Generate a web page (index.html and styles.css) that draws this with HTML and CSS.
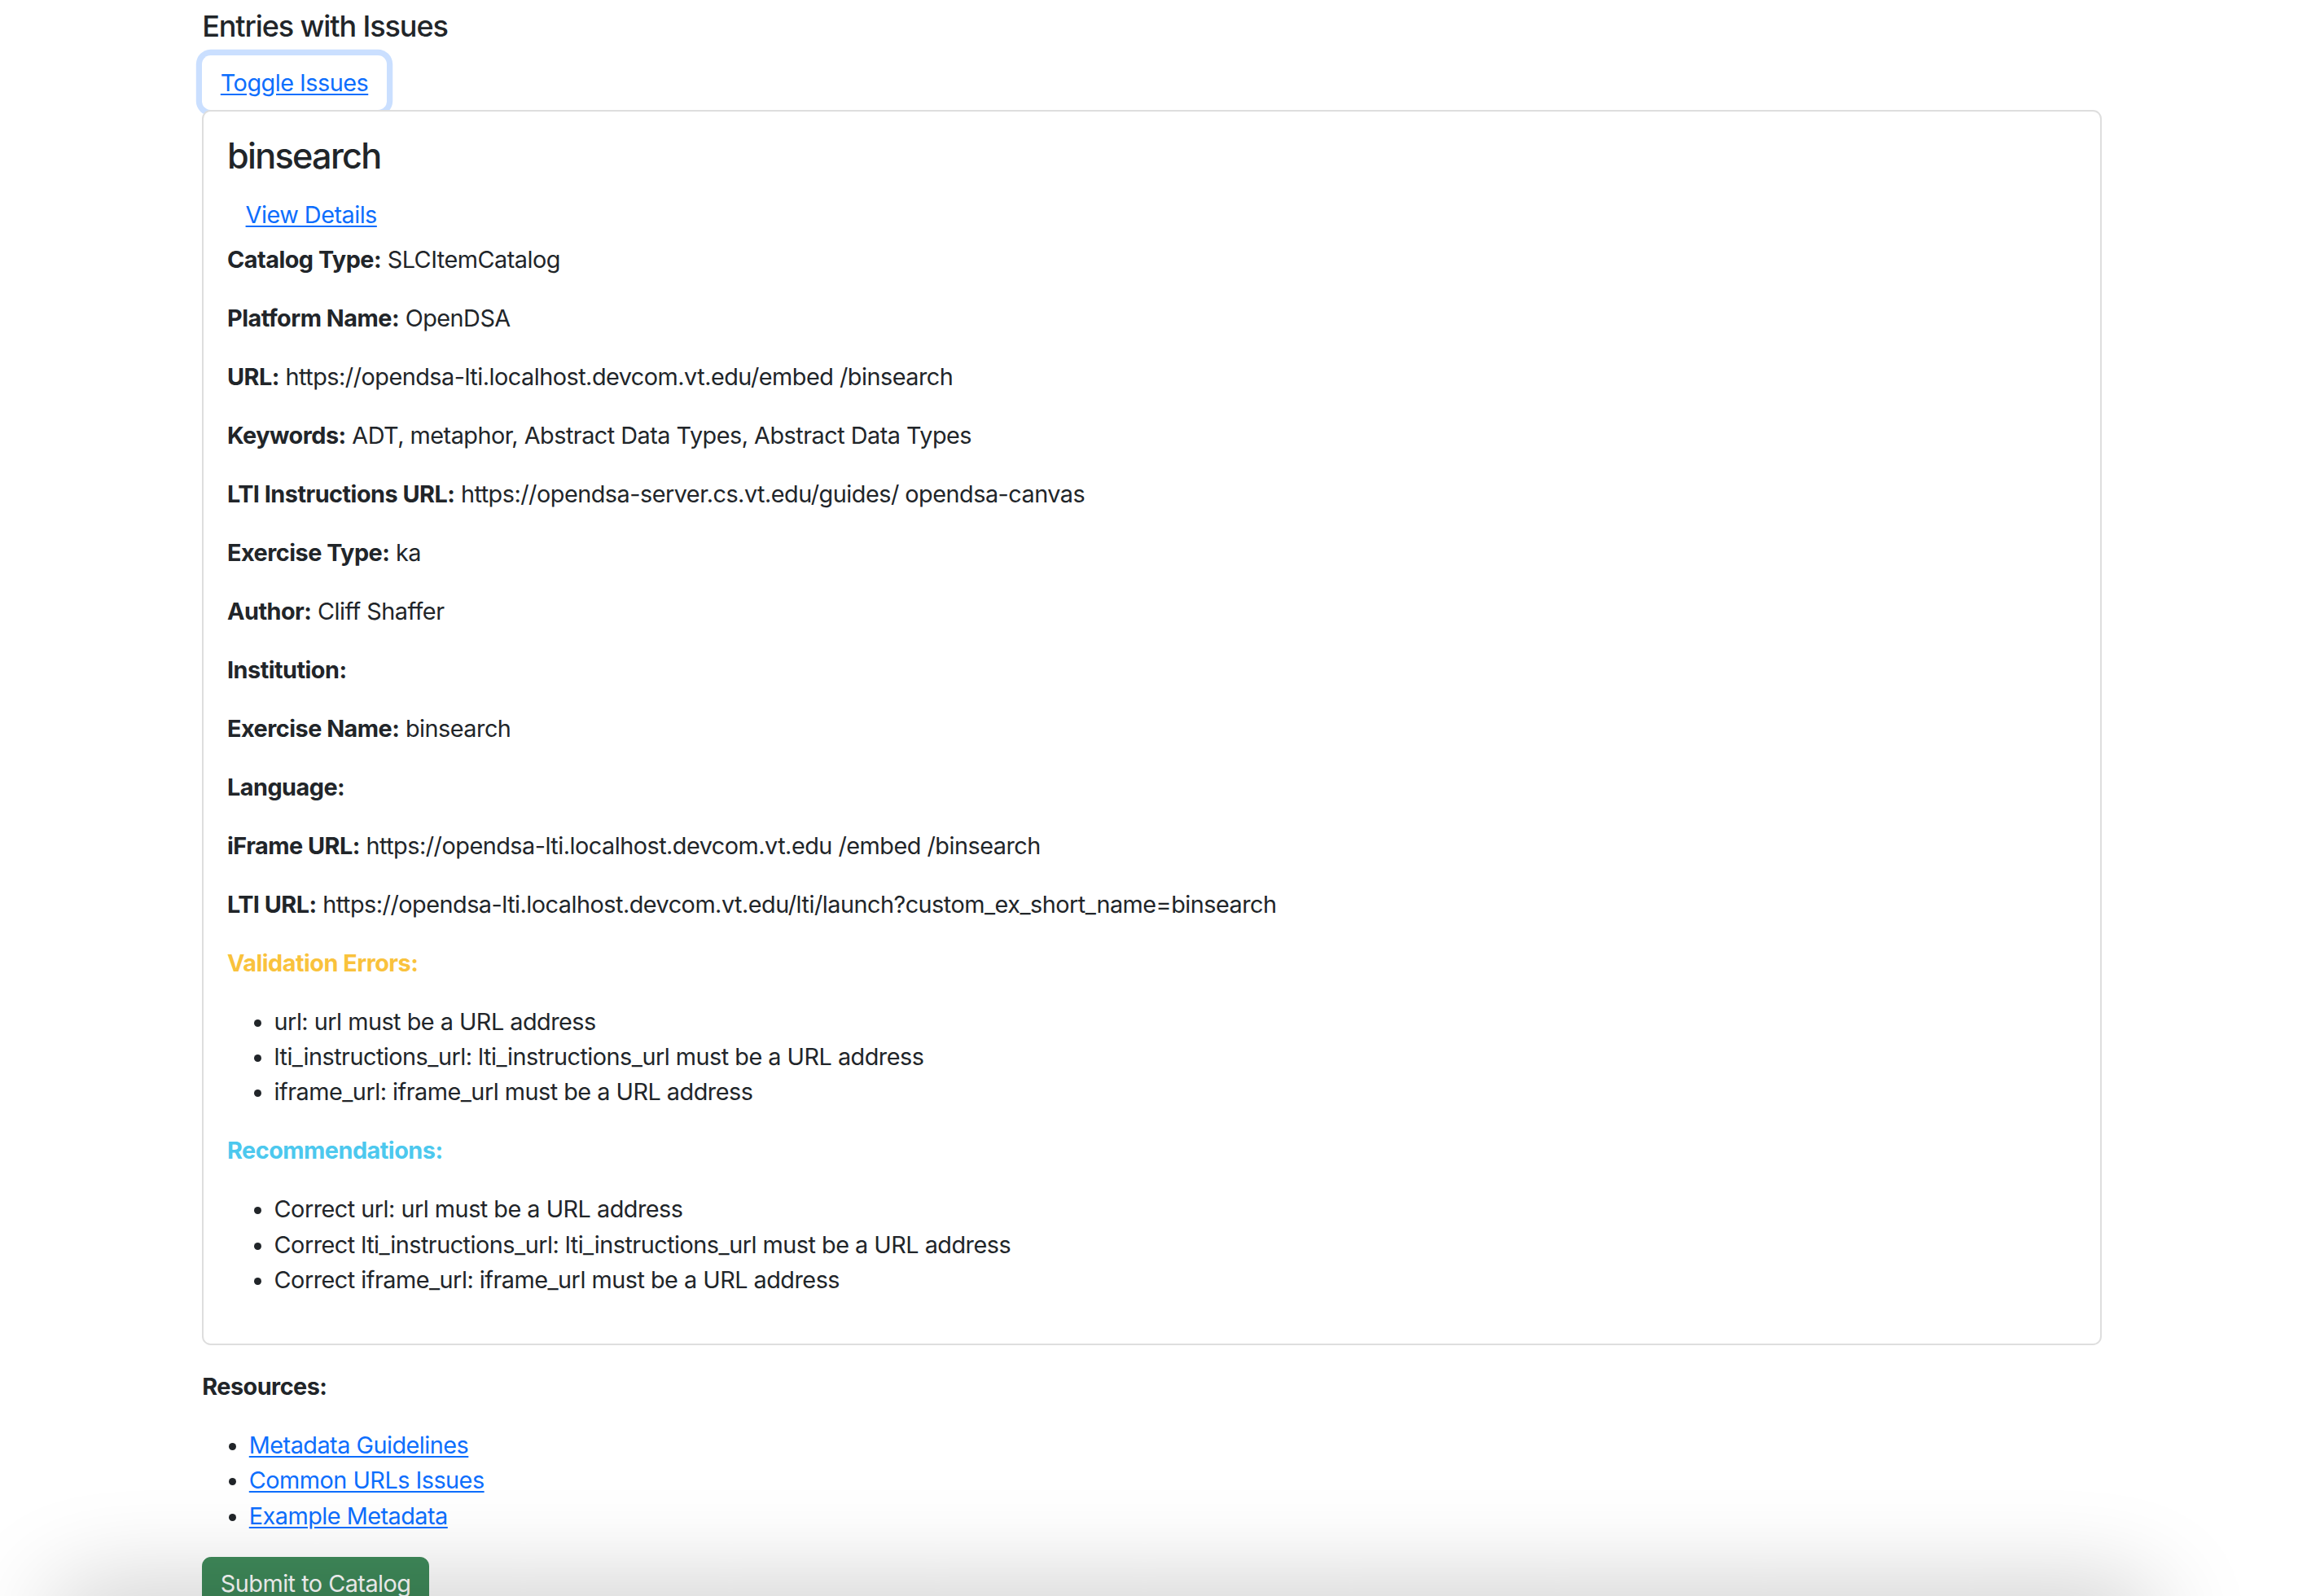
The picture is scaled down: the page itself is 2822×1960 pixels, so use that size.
FILE: index.html
```html
<!DOCTYPE html>
<html lang="en">
<head>
<meta charset="utf-8">
<title>Entries with Issues</title>
<link rel="stylesheet" href="styles.css">
</head>
<body>
<main class="container">
  <h5 class="section-title">Entries with Issues</h5>
  <div class="toggle-row">
    <button class="btn btn-link btn-focus" type="button">Toggle Issues</button>
  </div>
  <div class="card">
    <div class="card-body">
      <h4 class="card-title">binsearch</h4>
      <div class="details-row"><a class="btn btn-link" href="#">View Details</a></div>
      <p><strong>Catalog Type:</strong> SLCItemCatalog</p>
      <p><strong>Platform Name:</strong> OpenDSA</p>
      <p><strong>URL:</strong> https://opendsa-lti.localhost.devcom.vt.edu/embed /binsearch</p>
      <p><strong>Keywords:</strong> ADT, metaphor, Abstract Data Types, Abstract Data Types</p>
      <p><strong>LTI Instructions URL:</strong> https://opendsa-server.cs.vt.edu/guides/ opendsa-canvas</p>
      <p><strong>Exercise Type:</strong> ka</p>
      <p><strong>Author:</strong> Cliff Shaffer</p>
      <p><strong>Institution:</strong> </p>
      <p><strong>Exercise Name:</strong> binsearch</p>
      <p><strong>Language:</strong> </p>
      <p><strong>iFrame URL:</strong> https://opendsa-lti.localhost.devcom.vt.edu /embed /binsearch</p>
      <p><strong>LTI URL:</strong> https://opendsa-lti.localhost.devcom.vt.edu/lti/launch?custom_ex_short_name=binsearch</p>
      <p class="text-warning"><strong>Validation Errors:</strong></p>
      <ul>
        <li>url: url must be a URL address</li>
        <li>lti_instructions_url: lti_instructions_url must be a URL address</li>
        <li>iframe_url: iframe_url must be a URL address</li>
      </ul>
      <p class="text-info"><strong>Recommendations:</strong></p>
      <ul>
        <li>Correct url: url must be a URL address</li>
        <li>Correct lti_instructions_url: lti_instructions_url must be a URL address</li>
        <li>Correct iframe_url: iframe_url must be a URL address</li>
      </ul>
    </div>
  </div>
  <p><strong>Resources:</strong></p>
  <ul>
    <li><a href="#">Metadata Guidelines</a></li>
    <li><a href="#">Common URLs Issues</a></li>
    <li><a href="#">Example Metadata</a></li>
  </ul>
  <button class="btn btn-success" type="button">Submit to Catalog</button>
</main>
<div class="window-shadow"></div>
</body>
</html>
```

FILE: styles.css
```css
html {
  font-size: 28.8px;
}
body {
  margin: 0;
  padding-left: 7.2px;
  background: #ffffff;
  color: #212529;
  font-family: "Inter", "Roboto", "Liberation Sans", sans-serif;
  font-size: 1rem;
  line-height: 1.5;
  letter-spacing: -0.5px;
  overflow: hidden;
  height: 1960px;
}
.container {
  max-width: 2376px;
  margin: 0 auto;
  padding: 10.8px 21.6px 0;
  box-sizing: border-box;
}
.section-title {
  font-size: 1.25rem;
  font-weight: 500;
  line-height: 1.2;
  letter-spacing: -1.1px;
  margin: 0 0 0.5rem;
}
h4.card-title {
  font-size: 1.5rem;
  font-weight: 500;
  line-height: 1.2;
  letter-spacing: -1.7px;
  margin: 0 0 0.5rem;
}
.btn {
  display: inline-block;
  font-family: inherit;
  font-size: 1rem;
  font-weight: 400;
  line-height: 1.5;
  letter-spacing: -0.5px;
  padding: 10.8px 21.6px;
  border: 1.8px solid transparent;
  border-radius: 10.8px;
  background: transparent;
  text-align: center;
  cursor: pointer;
  vertical-align: middle;
}
.btn-link {
  color: #0d6efd;
  text-decoration: underline;
  text-underline-offset: 3px;
}
.btn-focus {
  box-shadow: 0 0 0 7.2px rgba(13, 110, 253, 0.22);
}
.toggle-row {
  line-height: 0;
}
.details-row {
  line-height: 0;
  margin-top: -1.8px;
}
.card {
  position: relative;
  background: #ffffff;
  border: 2px solid #dedede;
  border-radius: 10.8px;
  margin-bottom: 28.8px;
}
.card-body {
  padding: 28.8px;
}
p {
  margin: 0 0 28.8px;
}
strong {
  font-weight: 700;
}
ul {
  margin: 0 0 28.8px;
  padding-left: 57.6px;
}
a {
  color: #0d6efd;
  text-decoration: underline;
  text-underline-offset: 3px;
}
.text-warning {
  color: #f9c23c;
}
.text-info {
  color: #4cc8ee;
}
.btn-success {
  background: #3f8a5a;
  border-color: #3f8a5a;
  color: #ffffff;
}
.window-shadow {
  position: fixed;
  left: 70px;
  right: 180px;
  top: 1960px;
  height: 80px;
  border-radius: 80px;
  box-shadow: 0 0 120px 10px rgba(0, 0, 0, 0.22);
  pointer-events: none;
}
```
